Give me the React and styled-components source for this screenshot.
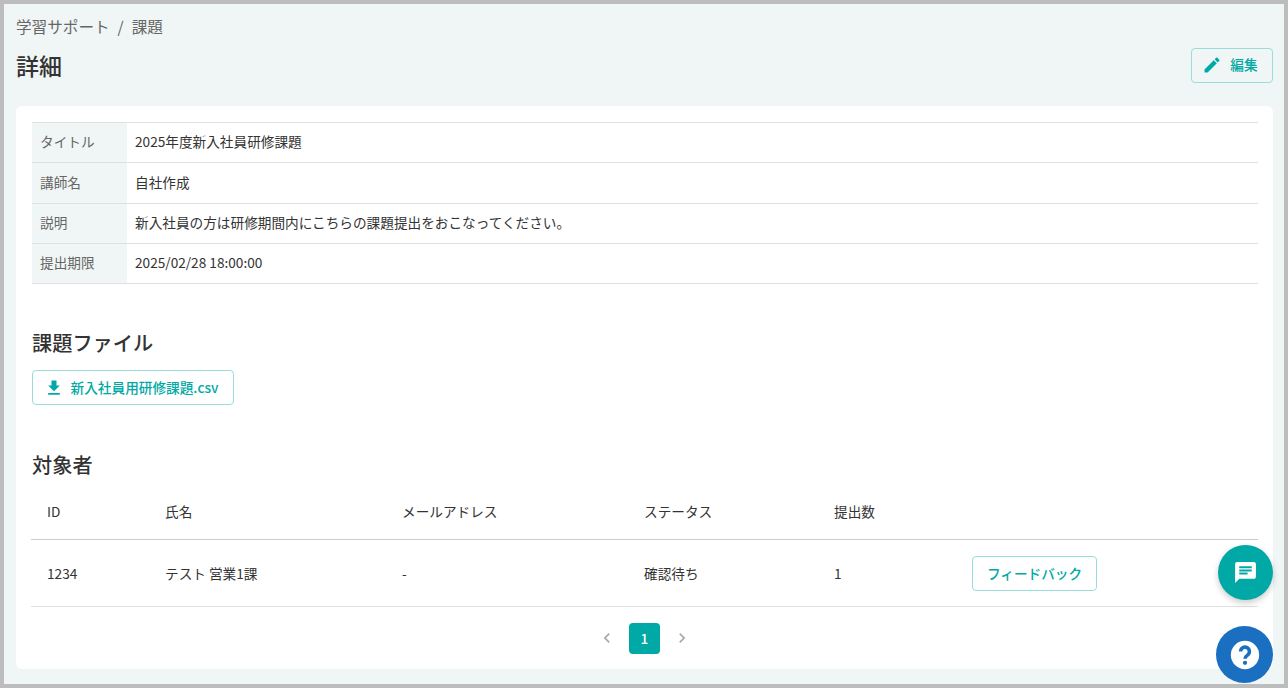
import React from "react";
import styled, { createGlobalStyle } from "styled-components";

const teal = "#00a9a5";
const ink = "#333333";
const muted = "#666666";
const line = "#e0e0e0";
const wash = "#f0f5f5";

const GlobalStyle = createGlobalStyle`
  html, body {
    margin: 0;
    padding: 0;
  }
  body {
    font-family: "Noto Sans CJK JP", "Noto Sans", sans-serif;
    color: ${ink};
    background: #bdbdbd;
  }
  * {
    box-sizing: border-box;
  }
`;

const details = [
  { label: "タイトル", value: "2025年度新入社員研修課題", height: 40 },
  { label: "講師名", value: "自社作成", height: 41 },
  { label: "説明", value: "新入社員の方は研修期間内にこちらの課題提出をおこなってください。", height: 40 },
  { label: "提出期限", value: "2025/02/28 18:00:00", height: 40 },
];

const columns = [
  { title: "ID", width: 118 },
  { title: "氏名", width: 237 },
  { title: "メールアドレス", width: 242 },
  { title: "ステータス", width: 190 },
  { title: "提出数", width: 138 },
  { title: "", width: 302 },
];

function Icon({ d, size }) {
  return (
    <svg width={size} height={size} viewBox="0 0 24 24" fill="currentColor">
      <path d={d} />
    </svg>
  );
}

const icons = {
  edit: "M3 17.25V21h3.75L17.81 9.94l-3.75-3.75L3 17.25zM20.71 7.04c.39-.39.39-1.02 0-1.41l-2.34-2.34c-.39-.39-1.02-.39-1.41 0l-1.83 1.83 3.75 3.75 1.83-1.83z",
  download: "M19 9h-4V3H9v6H5l7 7 7-7zM5 18v2h14v-2H5z",
  chat: "M20 2H4c-1.1 0-1.99.9-1.99 2L2 22l4-4h14c1.1 0 2-.9 2-2V4c0-1.1-.9-2-2-2zM6 9h12v2H6V9zm8 5H6v-2h8v2zm4-6H6V6h12v2z",
  prev: "M15.41 7.41 14 6l-6 6 6 6 1.41-1.41L10.83 12z",
  next: "M10 6 8.59 7.41 13.17 12l-4.58 4.59L10 18l6-6z",
};

function HelpIcon() {
  return (
    <svg width="34" height="34" viewBox="0 0 24 24">
      <circle cx="12" cy="12" r="10" fill="#ffffff" />
      <path
        d="M8.9 9.6a3.1 3.1 0 1 1 4.9 2.5c-1.1.8-1.8 1.2-1.8 2.5"
        fill="none"
        stroke="#1a6fc0"
        strokeWidth="2.5"
      />
      <circle cx="12" cy="17.5" r="1.5" fill="#1a6fc0" />
    </svg>
  );
}

export default function App() {
  return (
    <>
      <GlobalStyle />
      <Frame>
        <Page>
          <Breadcrumb>
            <span>学習サポート</span>
            <Slash>/</Slash>
            <span>課題</span>
          </Breadcrumb>
          <Header>
            <PageTitle>詳細</PageTitle>
            <OutlineButton $width={82} $gap={8}>
              <Icon d={icons.edit} size={20} />
              <ButtonText>編集</ButtonText>
            </OutlineButton>
          </Header>
          <Card>
            <DetailList>
              {details.map((row) => (
                <DetailRow key={row.label} $height={row.height}>
                  <DetailLabel>{row.label}</DetailLabel>
                  <DetailValue>{row.value}</DetailValue>
                </DetailRow>
              ))}
            </DetailList>

            <SectionTitle $top={43}>課題ファイル</SectionTitle>
            <ButtonRow>
              <OutlineButton $width={202} $gap={7}>
                <Icon d={icons.download} size={20} />
                <ButtonText>新入社員用研修課題.csv</ButtonText>
              </OutlineButton>
            </ButtonRow>

            <SectionTitle $top={44}>対象者</SectionTitle>
            <Table>
              <colgroup>
                {columns.map((col, i) => (
                  <col key={i} width={col.width} />
                ))}
              </colgroup>
              <thead>
                <tr>
                  {columns.map((col, i) => (
                    <HeadCell key={i}>{col.title}</HeadCell>
                  ))}
                </tr>
              </thead>
              <tbody>
                <tr>
                  <BodyCell>1234</BodyCell>
                  <BodyCell>テスト 営業1課</BodyCell>
                  <BodyCell>-</BodyCell>
                  <BodyCell>確認待ち</BodyCell>
                  <BodyCell>1</BodyCell>
                  <ActionCell>
                    <OutlineButton $width={125}>
                      <ButtonText>フィードバック</ButtonText>
                    </OutlineButton>
                  </ActionCell>
                </tr>
              </tbody>
            </Table>

            <Pagination>
              <PageArrow>
                <Icon d={icons.prev} size={20} />
              </PageArrow>
              <PageNumber>1</PageNumber>
              <PageArrow>
                <Icon d={icons.next} size={20} />
              </PageArrow>
            </Pagination>
          </Card>
        </Page>
        <ChatFab>
          <Icon d={icons.chat} size={25} />
        </ChatFab>
        <HelpFab>
          <HelpIcon />
        </HelpFab>
      </Frame>
    </>
  );
}

const Frame = styled.div`
  position: relative;
  width: 1288px;
  height: 688px;
  padding: 4px;
  overflow: hidden;
  background: #bdbdbd;
`;

const Page = styled.main`
  height: 680px;
  padding: 12px 11px 0 12px;
  background: ${wash};
`;

const Breadcrumb = styled.nav`
  display: flex;
  align-items: center;
  height: 22px;
  padding-bottom: 2px;
  font-size: 15.6px;
  line-height: 20px;
  color: ${muted};
`;

const Slash = styled.span`
  margin: 0 8px;
`;

const Header = styled.header`
  display: flex;
  align-items: center;
  justify-content: space-between;
  height: 34px;
  margin-top: 10px;
  margin-bottom: 24px;
`;

const PageTitle = styled.h1`
  margin: 0;
  font-size: 23px;
  font-weight: 500;
  line-height: 34px;
  color: ${ink};
`;

const OutlineButton = styled.button`
  display: inline-flex;
  align-items: center;
  justify-content: center;
  gap: ${(p) => p.$gap || 0}px;
  width: ${(p) => p.$width}px;
  height: 35px;
  padding: 0 ${(p) => (p.$gap ? 4 : 0)}px 0 0;
  font-family: inherit;
  font-size: 13.65px;
  font-weight: 500;
  color: ${teal};
  background: transparent;
  border: 1px solid #99dddb;
  border-radius: 4px;
`;

const ButtonText = styled.span`
  padding-bottom: 2px;
`;

const Card = styled.section`
  height: 563px;
  padding: 16px 15px 0 16px;
  background: #ffffff;
  border-radius: 6px;
`;

const DetailList = styled.dl`
  margin: 0;
  border-top: 1px solid ${line};
`;

const DetailRow = styled.div`
  display: flex;
  height: ${(p) => p.$height}px;
  border-bottom: 1px solid ${line};
  font-size: 13.65px;
`;

const DetailLabel = styled.dt`
  display: flex;
  align-items: center;
  width: 95px;
  padding: 0 0 3px 8px;
  color: ${muted};
  background: ${wash};
`;

const DetailValue = styled.dd`
  display: flex;
  align-items: center;
  margin: 0;
  padding: 0 0 3px 8px;
  color: ${ink};
`;

const SectionTitle = styled.h2`
  margin: ${(p) => p.$top}px 0 0;
  font-size: 20.2px;
  font-weight: 500;
  line-height: 32px;
  color: ${ink};
`;

const ButtonRow = styled.div`
  margin-top: 11px;
`;

const Table = styled.table`
  width: 1227px;
  margin-left: -1px;
  border-collapse: collapse;
  table-layout: fixed;
  font-size: 13.65px;
`;

const HeadCell = styled.th`
  height: 58px;
  padding: 2px 16px 0;
  font-weight: 400;
  text-align: left;
  color: ${ink};
  border-bottom: 1px solid #cccccc;
`;

const BodyCell = styled.td`
  height: 67px;
  padding: 0 16px;
  color: ${ink};
  border-bottom: 1px solid ${line};
`;

const ActionCell = styled(BodyCell)`
  padding-top: 2px;
`;

const Pagination = styled.div`
  display: flex;
  align-items: center;
  justify-content: center;
  gap: 12px;
  margin-top: 16px;
  padding-right: 1px;
`;

const PageArrow = styled.span`
  display: flex;
  align-items: center;
  justify-content: center;
  width: 20px;
  height: 31px;
  color: #aaaaaa;
`;

const PageNumber = styled.span`
  display: flex;
  align-items: center;
  justify-content: center;
  width: 31px;
  height: 31px;
  font-size: 13.65px;
  font-weight: 500;
  color: #ffffff;
  background: ${teal};
  border-radius: 4px;
`;

const ChatFab = styled.button`
  position: absolute;
  left: 1218px;
  top: 545px;
  display: flex;
  align-items: center;
  justify-content: center;
  width: 55px;
  height: 55px;
  padding: 0;
  color: #ffffff;
  background: ${teal};
  border: 0;
  border-radius: 50%;
  box-shadow: 0 3px 6px rgba(0, 0, 0, 0.2);
`;

const HelpFab = styled.button`
  position: absolute;
  left: 1216px;
  top: 626px;
  display: flex;
  align-items: center;
  justify-content: center;
  width: 57px;
  height: 57px;
  padding: 0;
  background: #1a6fc0;
  border: 0;
  border-radius: 50%;
`;
